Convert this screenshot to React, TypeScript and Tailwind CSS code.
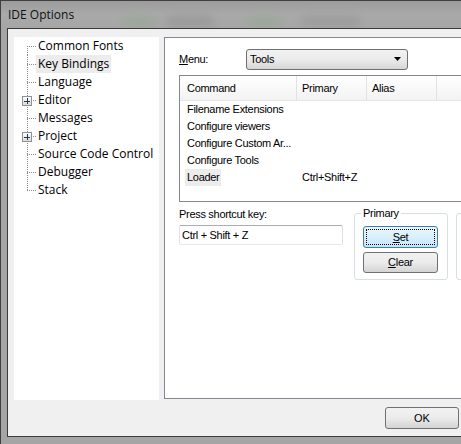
import React from "react";

const treeItems: { label: string; plus?: boolean; selected?: boolean }[] = [
  { label: "Common Fonts" },
  { label: "Key Bindings", selected: true },
  { label: "Language" },
  { label: "Editor", plus: true },
  { label: "Messages" },
  { label: "Project", plus: true },
  { label: "Source Code Control" },
  { label: "Debugger" },
  { label: "Stack" },
];

const rows: { cmd: string; primary?: string; selected?: boolean }[] = [
  { cmd: "Filename Extensions" },
  { cmd: "Configure viewers" },
  { cmd: "Configure Custom Ar..." },
  { cmd: "Configure Tools" },
  { cmd: "Loader", primary: "Ctrl+Shift+Z", selected: true },
];

function TreeGutter({ first, last, plus }: { first: boolean; last: boolean; plus?: boolean }) {
  return (
    <svg width="22" height="18" className="shrink-0 block" shapeRendering="crispEdges">
      <line
        x1="13.5"
        x2="13.5"
        y1={first ? 9 : 0}
        y2={last ? 10 : 18}
        stroke="#8c8c8c"
        strokeWidth="1"
        strokeDasharray="1 1"
      />
      <line x1="13" x2="22" y1="9.5" y2="9.5" stroke="#8c8c8c" strokeWidth="1" strokeDasharray="1 1" />
      {plus && (
        <g>
          <defs>
            <linearGradient id="pb" x1="0" y1="0" x2="0" y2="1">
              <stop offset="0" stopColor="#ffffff" />
              <stop offset="1" stopColor="#d8d8d8" />
            </linearGradient>
          </defs>
          <rect x="8.5" y="5.5" width="9" height="9" fill="url(#pb)" stroke="#919191" />
          <line x1="10" x2="16" y1="10" y2="10" stroke="#1e395b" />
          <line x1="13" x2="13" y1="7" y2="13" stroke="#1e395b" />
        </g>
      )}
    </svg>
  );
}

export default function App() {
  const ui = { fontFamily: '"Liberation Sans", Arial, sans-serif' } as React.CSSProperties;
  return (
    <div
      className="w-[461px] h-[444px] overflow-hidden bg-[#a5a5a5] flex flex-col border-l border-t border-[#3f3f3f] text-black"
      style={{ fontFamily: '"Open Sans", "Noto Sans", sans-serif' }}
    >
      {/* title bar */}
      <div className="relative h-[27px] shrink-0 flex items-center pl-[7px] text-[12px] text-[#111] bg-gradient-to-b from-[#9c9c9c] via-[#a9a9a9] to-[#a6a6a6] overflow-hidden">
        <span className="absolute left-[120px] top-[15px] w-[36px] h-[10px] rounded-full bg-[#7fa87a] opacity-30 blur-[4px]" />
        <span className="absolute left-[165px] top-[15px] w-[48px] h-[10px] rounded-full bg-[#7a7a7a] opacity-30 blur-[4px]" />
        <span className="absolute left-[245px] top-[15px] w-[36px] h-[10px] rounded-full bg-[#7fa87a] opacity-30 blur-[4px]" />
        <span className="absolute left-[300px] top-[15px] w-[60px] h-[10px] rounded-full bg-[#7a7a7a] opacity-25 blur-[4px]" />
        <span className="relative">IDE Options</span>
      </div>

      {/* client area */}
      <div className="flex-1 ml-[6px] mb-[7px] border-l border-t border-b border-[#3a3a3a] bg-[#f0f0f0] flex flex-col pl-[6px] pt-[8px] min-h-0">
        <div className="flex items-start">
          {/* tree */}
          <div className="w-[145px] h-[363px] bg-white shrink-0 text-[12px] leading-[18px]">
            {treeItems.map((it, i) => (
              <div key={it.label} className="flex h-[18px] items-center">
                <TreeGutter first={i === 0} last={i === treeItems.length - 1} plus={it.plus} />
                <span className={`px-[2px] h-[18px] whitespace-nowrap ${it.selected ? "bg-[#ececec]" : ""}`}>
                  {it.label}
                </span>
              </div>
            ))}
          </div>

          {/* right panel */}
          <div
            className="ml-[5px] w-[320px] h-[362px] shrink-0 border border-[#828790] bg-white pl-[14px] pt-[11px] text-[11px] tracking-[-0.3px]"
            style={ui}
          >
            <div className="flex items-center h-[21px]">
              <div className="w-[67px]">
                <span className="underline">M</span>enu:
              </div>
              <div className="w-[162px] h-[21px] rounded-[3px] border border-[#707070] bg-gradient-to-b from-[#f2f2f2] via-[#ebebeb] to-[#d6d6d6] flex items-center pl-[3px] pr-[5px] justify-between">
                <span>Tools</span>
                <svg width="8" height="5" className="block">
                  <path d="M0 0 H7 L3.5 4 Z" fill="#000" />
                </svg>
              </div>
            </div>

            {/* list view */}
            <div className="mt-[5px] w-[310px] h-[127px] border border-[#828790] bg-white">
              <div className="flex h-[25px] border-b border-[#e5e5e5] bg-gradient-to-b from-white to-[#f3f3f3]">
                <div className="w-[117px] border-r border-[#e2e2e2] pl-[7px] flex items-center">Command</div>
                <div className="w-[70px] border-r border-[#e2e2e2] pl-[5px] flex items-center">Primary</div>
                <div className="w-[70px] border-r border-[#e2e2e2] pl-[5px] flex items-center">Alias</div>
                <div className="flex-1" />
              </div>
              {rows.map((r) => (
                <div key={r.cmd} className="flex h-[17px] items-center">
                  <div className="w-[117px] pl-[5px] whitespace-nowrap">
                    <span className={`px-[2px] inline-block h-[17px] leading-[17px] ${r.selected ? "bg-[#ececec]" : ""}`}>
                      {r.cmd}
                    </span>
                  </div>
                  <div className="w-[70px] pl-[5px] whitespace-nowrap">{r.primary ?? ""}</div>
                </div>
              ))}
            </div>

            {/* bottom section */}
            <div className="flex items-start mt-[6px]">
              <div className="w-[164px] shrink-0">
                <div className="h-[13px] leading-[13px]">Press shortcut key:</div>
                <div className="mt-[4px] h-[20px] rounded-[2px] border border-[#abadb3] border-b-[#e3e9ef] border-l-[#e2e3ea] border-r-[#dbdfe6] pl-[2px] flex items-center">
                  Ctrl + Shift + Z
                </div>
              </div>

              <div className="relative ml-[11px] mt-[5px] w-[94px] h-[67px] shrink-0 rounded-[3px] border border-[#d5dfe5] pl-[8px] pt-[12px]">
                <span className="absolute -top-[7px] left-[6px] px-[2px] bg-white leading-[13px]">Primary</span>
                <div className="w-[75px] h-[22px] rounded-[3px] border border-[#3c7fb1] bg-gradient-to-b from-[#eaf6fd] via-[#d9f0fc] to-[#bee6fd] p-[2px]">
                  <div className="w-full h-full border border-dotted border-black flex items-center justify-center">
                    <span>
                      <span className="underline">S</span>et
                    </span>
                  </div>
                </div>
                <div className="mt-[4px] w-[75px] h-[21px] rounded-[3px] border border-[#707070] bg-gradient-to-b from-[#f2f2f2] via-[#ebebeb] to-[#d4d4d4] flex items-center justify-center">
                  <span>
                    <span className="underline">C</span>lear
                  </span>
                </div>
              </div>

              <div className="ml-[8px] mt-[5px] w-[94px] h-[67px] shrink-0 rounded-[3px] border border-[#d5dfe5]" />
            </div>
          </div>
        </div>

        {/* OK row */}
        <div className="mt-[7px] flex">
          <div
            className="ml-[371px] w-[74px] h-[22px] shrink-0 rounded-[3px] border border-[#707070] bg-gradient-to-b from-[#f2f2f2] via-[#ebebeb] to-[#d4d4d4] flex items-center justify-center text-[11px]"
            style={ui}
          >
            OK
          </div>
        </div>
      </div>
    </div>
  );
}
